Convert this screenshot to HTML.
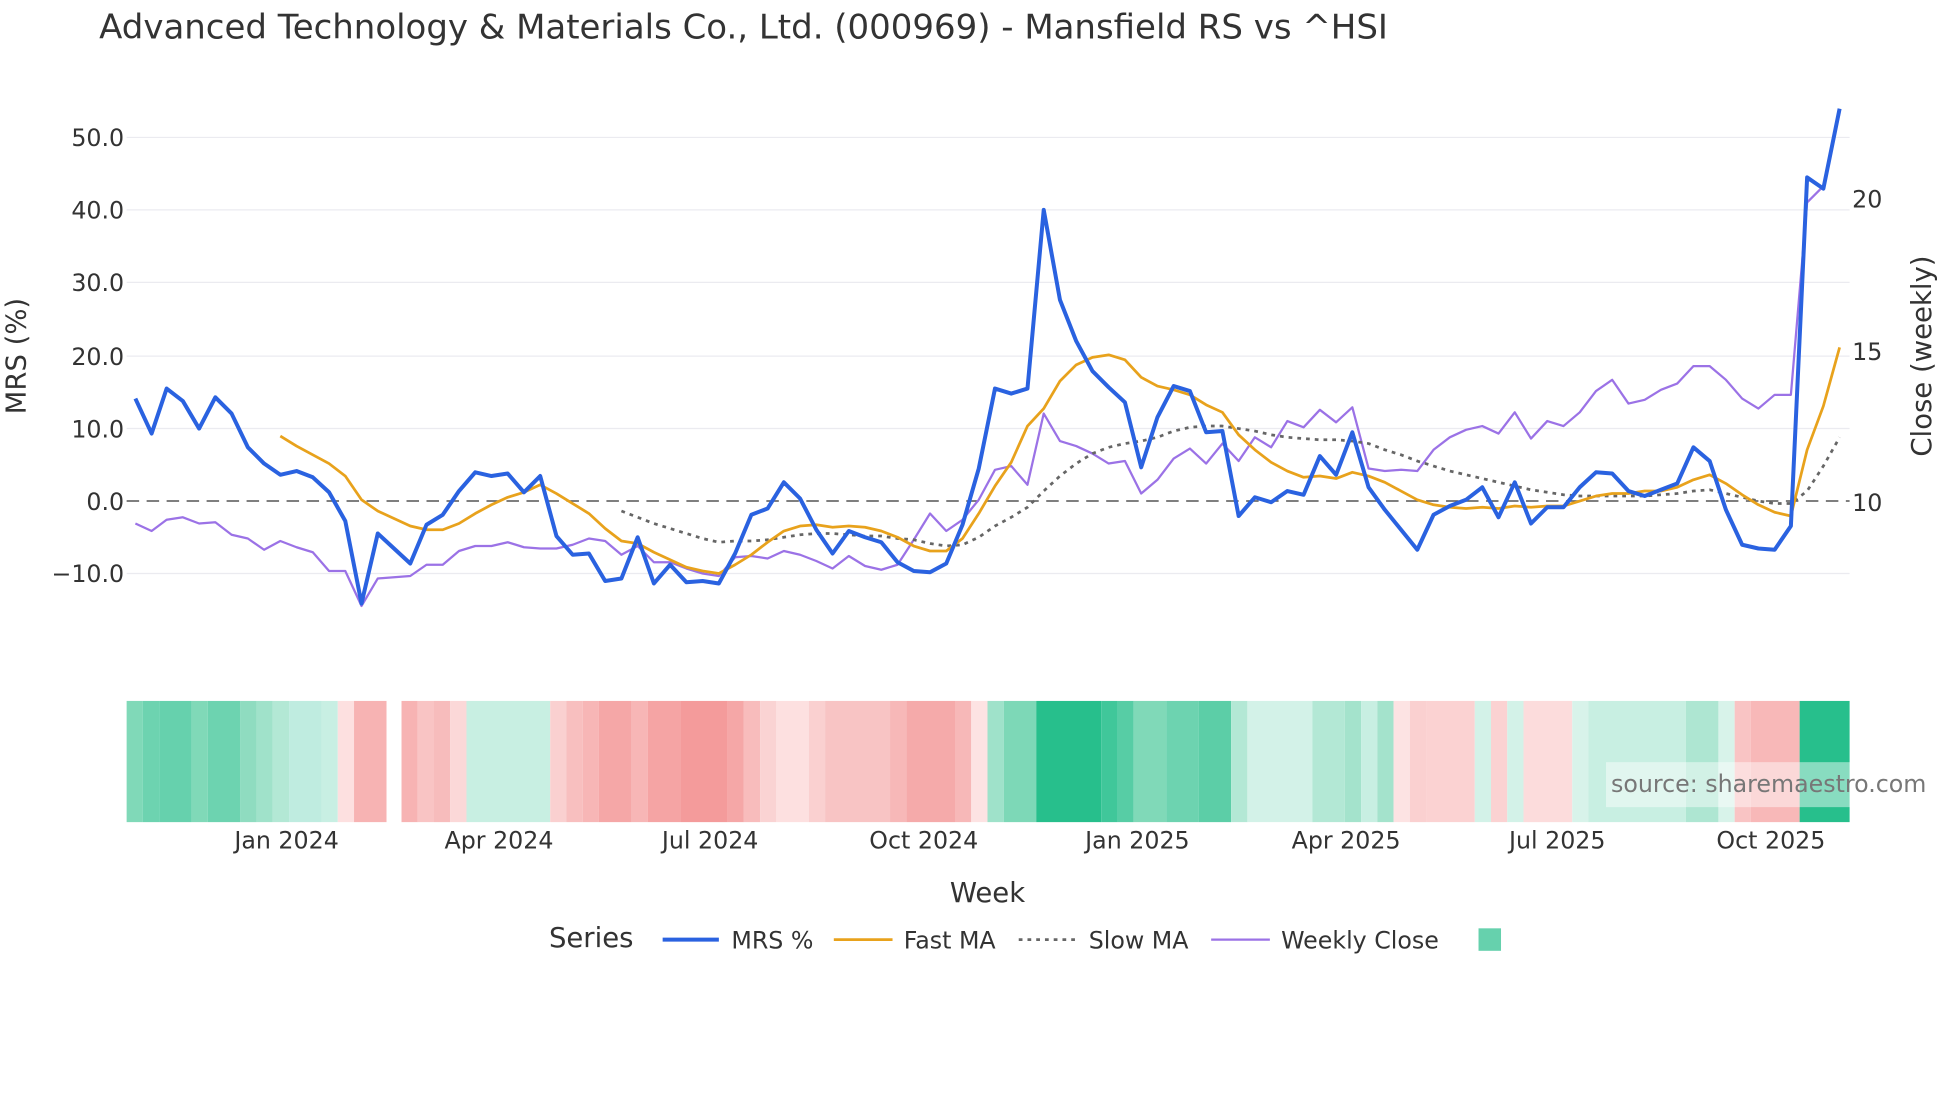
<!DOCTYPE html>
<html><head><meta charset="utf-8"><style>html,body{margin:0;padding:0;background:#fff;width:1960px;height:1102px;overflow:hidden}svg{display:block}text{font-family:"DejaVu Sans","Liberation Sans",sans-serif;fill:#333}</style></head><body>
<svg width="1960" height="1102" viewBox="0 0 1568 882" xmlns="http://www.w3.org/2000/svg">
<text x="79" y="31" font-size="27.2">Advanced Technology &amp; Materials Co., Ltd. (000969) - Mansfield RS vs ^HSI</text>
<g stroke="#ebebf0" stroke-width="1">
<line x1="101" x2="1480" y1="110" y2="110"/><line x1="101" x2="1480" y1="168" y2="168"/><line x1="101" x2="1480" y1="226" y2="226"/><line x1="101" x2="1480" y1="285" y2="285"/><line x1="101" x2="1480" y1="343" y2="343"/><line x1="101" x2="1480" y1="459" y2="459"/>
</g>
<line x1="101" x2="1480" y1="401" y2="401" stroke="#555" stroke-dasharray="10,6" stroke-width="1.2"/>
<g font-size="19" text-anchor="end">
<text x="99" y="117">50.0</text><text x="99" y="175">40.0</text><text x="99" y="233">30.0</text><text x="99" y="292">20.0</text><text x="99" y="350">10.0</text><text x="99" y="408">0.0</text><text x="99" y="466">−10.0</text>
</g>
<g font-size="19"><text x="1482" y="166">20</text><text x="1482" y="288">15</text><text x="1482" y="409">10</text></g>
<text transform="translate(20,285) rotate(-90)" font-size="22" text-anchor="middle">MRS (%)</text>
<text transform="translate(1545,285) rotate(-90)" font-size="22" text-anchor="middle">Close (weekly)</text>
<g fill="none" stroke-linejoin="round">
<polyline stroke="#9b72e6" stroke-width="1.8" points="108,419 121,425 133,416 146,414 159,419 172,418 185,428 198,431 211,440 224,433 237,438 250,442 263,457 276,457 289,485 302,463 315,462 328,461 341,452 354,452 367,441 380,437 393,437 406,434 419,438 432,439 445,439 458,436 471,431 484,433 497,444 510,437 523,450 536,450 549,455 562,459 575,461 588,446 601,445 614,447 627,441 640,444 653,449 666,455 679,445 692,453 705,456 718,452 731,432 744,411 757,425 770,416 783,400 796,376 809,373 822,388 835,331 848,353 861,357 874,363 887,371 900,369 913,395 926,384 939,367 952,359 965,371 978,355 991,369 1004,350 1017,358 1030,337 1043,342 1056,328 1069,338 1082,326 1095,375 1108,377 1121,376 1134,377 1147,360 1160,350 1173,344 1186,341 1199,347 1212,330 1225,351 1238,337 1251,341 1264,330 1277,313 1290,304 1303,323 1316,320 1329,312 1342,307 1355,293 1368,293 1381,304 1394,319 1407,327 1420,316 1433,316 1446,162 1459,149 1472,90"/>
<polyline stroke="#666" stroke-width="2.2" stroke-dasharray="3,4" points="497,409 510,414 523,419 536,423 549,427 562,431 575,434 588,433 601,433 614,432 627,430 640,428 653,427 666,427 679,428 692,429 705,429 718,431 731,432 744,435 757,437 770,436 783,430 796,421 809,414 822,406 835,393 848,381 861,371 874,363 887,358 900,355 913,353 926,350 939,345 952,342 965,341 978,341 991,343 1004,345 1017,348 1030,350 1043,351 1056,352 1069,352 1082,353 1095,355 1108,360 1121,364 1134,369 1147,373 1160,377 1173,380 1186,383 1199,386 1212,389 1225,392 1238,394 1251,396 1264,397 1277,397 1290,397 1303,397 1316,397 1329,396 1342,395 1355,393 1368,392 1381,395 1394,398 1407,401 1420,403 1433,403 1446,393 1459,373 1472,350"/>
<polyline stroke="#e8a21c" stroke-width="2.2" points="224,349 237,357 250,364 263,371 276,381 289,400 302,409 315,415 328,421 341,424 354,424 367,419 380,411 393,404 406,398 419,394 432,388 445,395 458,403 471,411 484,423 497,433 510,435 523,442 536,448 549,454 562,457 575,459 588,452 601,444 614,434 627,425 640,421 653,420 666,422 679,421 692,422 705,425 718,430 731,437 744,441 757,441 770,431 783,411 796,389 809,370 822,341 835,327 848,305 861,292 874,286 887,284 900,288 913,302 926,309 939,312 952,316 965,324 978,330 991,348 1004,360 1017,370 1030,377 1043,382 1056,381 1069,383 1082,378 1095,381 1108,386 1121,393 1134,400 1147,404 1160,406 1173,407 1186,406 1199,407 1212,405 1225,406 1238,405 1251,405 1264,401 1277,397 1290,395 1303,395 1316,393 1329,393 1342,390 1355,384 1368,380 1381,387 1394,396 1407,404 1420,410 1433,413 1446,360 1459,325 1472,278"/>
<polyline stroke="#2a62e0" stroke-width="3.2" points="108,319 121,347 133,311 146,321 159,343 172,318 185,331 198,358 211,371 224,380 237,377 250,382 263,394 276,417 289,483 302,427 315,439 328,451 341,420 354,412 367,393 380,378 393,381 406,379 419,394 432,381 445,429 458,444 471,443 484,465 497,463 510,430 523,467 536,452 549,466 562,465 575,467 588,443 601,412 614,407 627,386 640,399 653,424 666,443 679,425 692,430 705,434 718,450 731,457 744,458 757,451 770,420 783,375 796,311 809,315 822,311 835,168 848,240 861,273 874,297 887,310 900,322 913,374 926,334 939,309 952,313 965,346 978,345 991,413 1004,398 1017,402 1030,393 1043,396 1056,365 1069,380 1082,346 1095,390 1108,408 1121,424 1134,440 1147,412 1160,405 1173,400 1186,390 1199,414 1212,386 1225,419 1238,406 1251,406 1264,390 1277,378 1290,379 1303,393 1316,397 1329,392 1342,387 1355,358 1368,369 1381,408 1394,436 1407,439 1420,440 1433,421 1446,142 1459,151 1472,87"/>
</g>
<g>
<rect x="101" y="561" width="13" height="97" fill="#80d9b8"/><rect x="114" y="561" width="13" height="97" fill="#6dd3b0"/><rect x="127" y="561" width="26" height="97" fill="#66d1ad"/><rect x="153" y="561" width="13" height="97" fill="#80d9b8"/><rect x="166" y="561" width="26" height="97" fill="#6dd3b0"/><rect x="192" y="561" width="13" height="97" fill="#8fdcc0"/><rect x="205" y="561" width="13" height="97" fill="#a0e2ca"/><rect x="218" y="561" width="13" height="97" fill="#b3e8d5"/><rect x="231" y="561" width="26" height="97" fill="#bfece0"/><rect x="257" y="561" width="13" height="97" fill="#c8efe3"/><rect x="270" y="561" width="13" height="97" fill="#fde0e0"/><rect x="283" y="561" width="26" height="97" fill="#f7b3b3"/>
<rect x="321" y="561" width="13" height="97" fill="#f7b3b3"/><rect x="334" y="561" width="13" height="97" fill="#f9c4c4"/><rect x="347" y="561" width="13" height="97" fill="#f7bcbc"/><rect x="360" y="561" width="13" height="97" fill="#fbd8d8"/><rect x="373" y="561" width="67" height="97" fill="#c8efe2"/><rect x="440" y="561" width="13" height="97" fill="#fad0d0"/><rect x="453" y="561" width="13" height="97" fill="#f8bfbf"/><rect x="466" y="561" width="13" height="97" fill="#f7b6b6"/><rect x="479" y="561" width="26" height="97" fill="#f5a7a7"/><rect x="505" y="561" width="13" height="97" fill="#f7b6b6"/><rect x="518" y="561" width="26" height="97" fill="#f5a4a4"/><rect x="544" y="561" width="38" height="97" fill="#f49b9b"/><rect x="582" y="561" width="13" height="97" fill="#f5a7a7"/><rect x="595" y="561" width="13" height="97" fill="#f8bcbc"/><rect x="608" y="561" width="13" height="97" fill="#fad3d3"/><rect x="621" y="561" width="26" height="97" fill="#fde0e0"/><rect x="647" y="561" width="13" height="97" fill="#fad0d0"/><rect x="660" y="561" width="52" height="97" fill="#f8c4c4"/><rect x="712" y="561" width="13" height="97" fill="#f7b8b8"/><rect x="725" y="561" width="39" height="97" fill="#f5aaaa"/><rect x="764" y="561" width="13" height="97" fill="#f7b8b8"/><rect x="777" y="561" width="13" height="97" fill="#fde3e3"/><rect x="790" y="561" width="13" height="97" fill="#9fe2ca"/><rect x="803" y="561" width="26" height="97" fill="#7dd8b7"/><rect x="829" y="561" width="52" height="97" fill="#27bf8c"/><rect x="881" y="561" width="13" height="97" fill="#40c79a"/><rect x="894" y="561" width="13" height="97" fill="#57cda5"/><rect x="907" y="561" width="26" height="97" fill="#80d9b8"/><rect x="933" y="561" width="26" height="97" fill="#6dd3b0"/><rect x="959" y="561" width="26" height="97" fill="#5ccea7"/><rect x="985" y="561" width="13" height="97" fill="#b3e8d5"/><rect x="998" y="561" width="52" height="97" fill="#d3f2e8"/><rect x="1050" y="561" width="26" height="97" fill="#b3e8d5"/><rect x="1076" y="561" width="13" height="97" fill="#a4e3cc"/><rect x="1089" y="561" width="13" height="97" fill="#c8efe2"/><rect x="1102" y="561" width="13" height="97" fill="#a4e3cc"/><rect x="1115" y="561" width="13" height="97" fill="#fde3e3"/><rect x="1128" y="561" width="13" height="97" fill="#fad0d0"/><rect x="1141" y="561" width="39" height="97" fill="#fbd2d2"/><rect x="1180" y="561" width="13" height="97" fill="#d3f2e8"/><rect x="1193" y="561" width="13" height="97" fill="#fbd2d2"/><rect x="1206" y="561" width="13" height="97" fill="#d3f2e8"/><rect x="1219" y="561" width="39" height="97" fill="#fcdcdc"/><rect x="1258" y="561" width="13" height="97" fill="#d8f3ea"/><rect x="1271" y="561" width="78" height="97" fill="#c8efe2"/><rect x="1349" y="561" width="26" height="97" fill="#aee6d2"/><rect x="1375" y="561" width="13" height="97" fill="#d8f3ea"/><rect x="1388" y="561" width="13" height="97" fill="#f9c4c4"/><rect x="1401" y="561" width="39" height="97" fill="#f8b8b8"/><rect x="1440" y="561" width="40" height="97" fill="#27bf8c"/>
</g>
<rect x="1285" y="610" width="262" height="36" fill="#fff" fill-opacity="0.45"/>
<text x="1289" y="634" font-size="19" style="fill:#777">source: sharemaestro.com</text>
<g font-size="19" text-anchor="middle">
<text x="229" y="679">Jan 2024</text><text x="399" y="679">Apr 2024</text><text x="568" y="679">Jul 2024</text><text x="739" y="679">Oct 2024</text><text x="910" y="679">Jan 2025</text><text x="1077" y="679">Apr 2025</text><text x="1246" y="679">Jul 2025</text><text x="1417" y="679">Oct 2025</text>
</g>
<text x="790" y="722" font-size="22" text-anchor="middle">Week</text>
<text x="439" y="758" font-size="22">Series</text>
<line x1="530" x2="575" y1="752" y2="752" stroke="#2a62e0" stroke-width="3.2"/>
<text x="585" y="759" font-size="19">MRS %</text>
<line x1="667" x2="714" y1="752" y2="752" stroke="#e8a21c" stroke-width="2.2"/>
<text x="723" y="759" font-size="19">Fast MA</text>
<line x1="815" x2="860" y1="752" y2="752" stroke="#666" stroke-width="2.2" stroke-dasharray="3,4"/>
<text x="871" y="759" font-size="19">Slow MA</text>
<line x1="969" x2="1016" y1="752" y2="752" stroke="#9b72e6" stroke-width="1.8"/>
<text x="1025" y="759" font-size="19">Weekly Close</text>
<rect x="1183" y="743" width="18" height="18" fill="#66d1ad"/>
</svg>
</body></html>
